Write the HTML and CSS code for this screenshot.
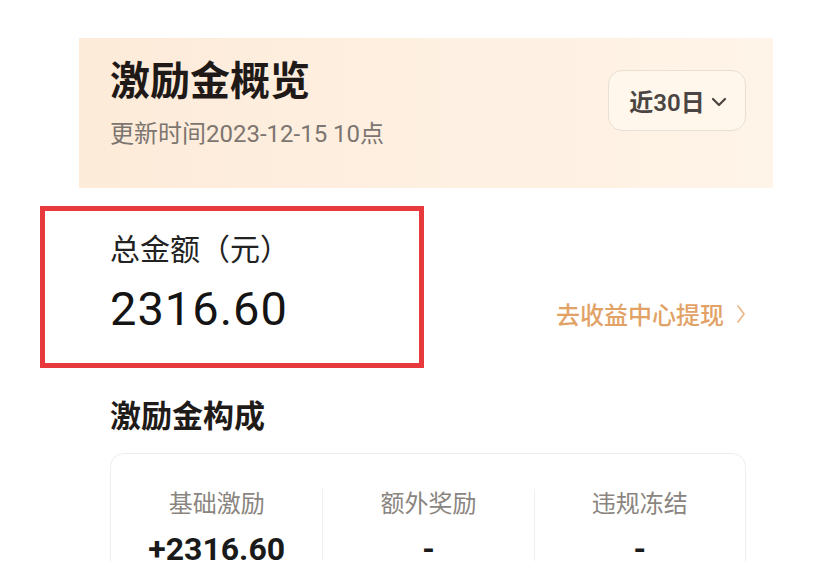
FILE: index.html
```html
<!DOCTYPE html>
<html lang="zh-CN">
<head>
<meta charset="utf-8">
<link rel="stylesheet" href="styles.css">
</head>
<body>
<div class="page">
  <section class="hero">
    <div class="hero-text">
      <h1 class="title">激励金概览</h1>
      <p class="updated">更新时间2023-12-15 10点</p>
    </div>
    <button class="range">近30日<svg class="chev-down" viewBox="0 0 16 10" width="16" height="10"><path d="M2 2 L8 8 L14 2" fill="none" stroke="#4a4542" stroke-width="2.2" stroke-linecap="round" stroke-linejoin="round"/></svg></button>
  </section>

  <section class="total">
    <div class="total-info">
      <div class="total-label">总金额（元）</div>
      <div class="total-amount">2316.60</div>
    </div>
    <a class="withdraw">去收益中心提现<svg class="chev-right" viewBox="0 0 10 20" width="10" height="20"><path d="M2 2 L8 10 L2 18" fill="none" stroke="#e8b98d" stroke-width="1.8" stroke-linecap="round" stroke-linejoin="round"/></svg></a>
    <div class="highlight"></div>
  </section>

  <section class="compose">
    <h2 class="compose-title">激励金构成</h2>
    <div class="card">
      <div class="col">
        <div class="col-label">基础激励</div>
        <div class="col-value">+2316.60</div>
      </div>
      <div class="col">
        <div class="col-label">额外奖励</div>
        <div class="col-value">-</div>
      </div>
      <div class="col">
        <div class="col-label">违规冻结</div>
        <div class="col-value">-</div>
      </div>
    </div>
  </section>
</div>
</body>
</html>
```

FILE: styles.css
```css
html, body {
  margin: 0;
  padding: 0;
  background: #ffffff;
  overflow: hidden;
}
body {
  font-family: Roboto, "Noto Sans CJK SC", "Noto Sans", sans-serif;
  color: #1f1b18;
}
.page {
  margin-left: 79px;
  width: 694px;
  padding-top: 38px;
}
.hero {
  height: 150px;
  box-sizing: border-box;
  background: linear-gradient(90deg, #fdebd9 0%, #fef0e2 55%, #fff4e8 100%);
  display: flex;
  justify-content: space-between;
  align-items: flex-start;
  padding: 20px 27px 0 31px;
}
.title {
  margin: 0;
  font-size: 40px;
  line-height: 48px;
  font-weight: 600;
  color: #1f1a17;
}
.updated {
  margin: 14px 0 0;
  font-size: 24px;
  line-height: 28px;
  color: #7c7570;
}
.range {
  margin-top: 12px;
  width: 138px;
  height: 61px;
  box-sizing: border-box;
  border: 1.5px solid #eadfd3;
  border-radius: 14px;
  background: rgba(255, 248, 240, 0.6);
  font-family: inherit;
  font-size: 24px;
  color: #4a4542;
  font-weight: 600;
  display: flex;
  align-items: center;
  justify-content: center;
  gap: 6px;
  padding: 0 0 0 2px;
}
.chev-down { margin-top: 2px; }
.total {
  position: relative;
  display: flex;
  justify-content: space-between;
  align-items: center;
  padding: 44px 27px 0 31px;
  height: 180px;
  box-sizing: border-box;
  align-items: flex-start;
}
.total-info {
  display: flex;
  flex-direction: column;
}
.total-label {
  font-size: 30px;
  line-height: 36px;
  color: #222;
}
.total-amount {
  font-size: 47px;
  line-height: 56px;
  margin-top: 13px;
  color: #141414;
  letter-spacing: 1px;
}
.withdraw {
  display: flex;
  align-items: center;
  gap: 12px;
  font-size: 24px;
  font-weight: 500;
  color: #e2a266;
  margin-top: 64px;
}
.highlight {
  position: absolute;
  left: -39px;
  top: 18px;
  width: 384px;
  height: 162px;
  box-sizing: border-box;
  border: 5px solid #e8393d;
}
.compose {
  padding: 29px 27px 0 31px;
}
.compose-title {
  margin: 0;
  font-size: 31px;
  line-height: 40px;
  font-weight: 600;
  color: #1f1b18;
}
.card {
  margin-top: 16px;
  border: 1.5px solid #ededed;
  border-radius: 14px;
  display: grid;
  grid-template-columns: repeat(3, 1fr);
  padding: 35px 0 20px;
  height: 160px;
  box-sizing: border-box;
}
.col {
  display: flex;
  flex-direction: column;
  align-items: center;
  border-left: 1px solid #f0f0f0;
}
.col:first-child { border-left: none; }
.col-label {
  font-size: 24px;
  line-height: 30px;
  color: #8a8580;
}
.col-value {
  margin-top: 12px;
  font-size: 32px;
  line-height: 36px;
  font-weight: 700;
  color: #1a1a1a;
}
```
